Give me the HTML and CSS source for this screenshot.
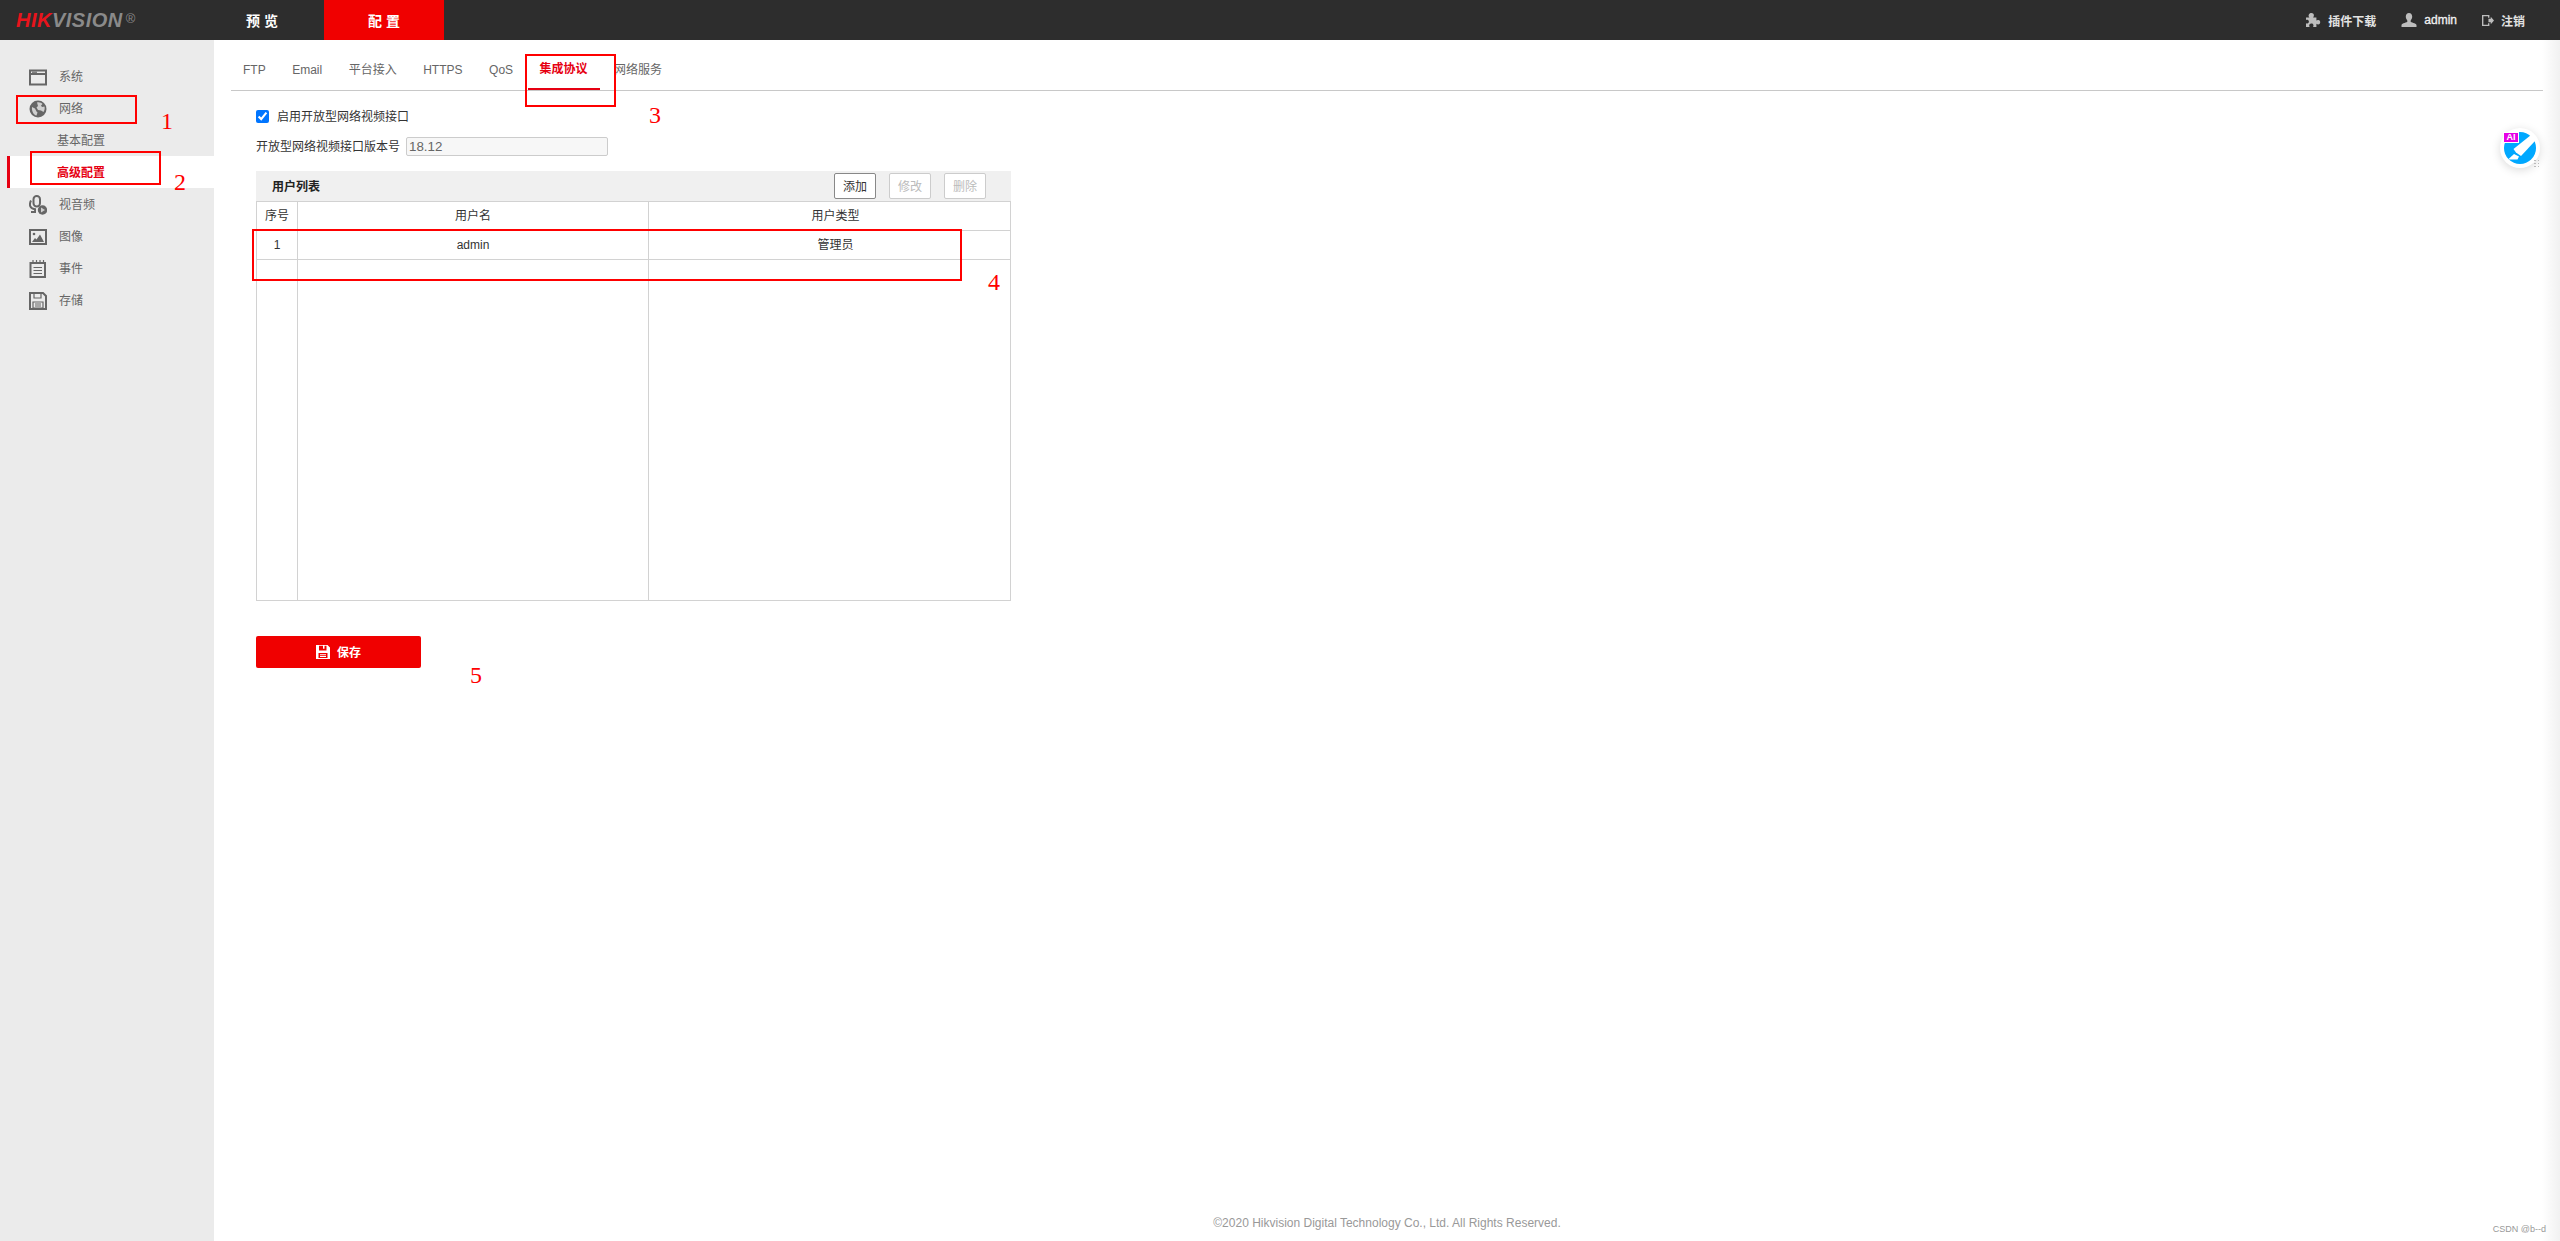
FILE: index.html
```html
<!DOCTYPE html>
<html lang="zh-CN">
<head>
<meta charset="utf-8">
<title>Hikvision 配置</title>
<link rel="stylesheet" href="styles.css">
</head>
<body>
<div class="app">
  <header class="topbar">
    <div class="logo"><span class="logo-hik">HIK</span><span class="logo-vision">VISION</span><span class="logo-reg">®</span></div>
    <nav class="mainnav">
      <a class="mainnav-item">预览</a>
      <a class="mainnav-item is-active">配置</a>
    </nav>
    <div class="tools">
      <div class="tool">
        <svg class="tool-icon" viewBox="0 0 16 16"><path d="M1 5.500h3.400C3.600 4.600 3.400 3.900 3.700 3 4.100 1.600 5.300 1 6.400 1c1.300 0 2.400.9 2.500 2.100.1.900-.2 1.600-.8 2.400h3.300v3.100c.9-.6 1.300-.7 2-.5 1.200.3 1.900 1.200 1.800 2.300-.1 1.100-1 1.900-2 2-.7 0-1.200-.2-1.800-.7V15H8c.5-.8.600-1.300.4-2-.3-1-1.200-1.500-2.200-1.400-1.100.1-1.900.9-2 1.900 0 .5.100 1 .5 1.500H1v-3.700c.6.300 1.100.4 1.600.2.800-.3 1.300-1 1.300-1.900S3.300 8 2.500 7.800C2 7.700 1.500 7.800 1 8.100z"/></svg>
        <span>插件下载</span>
      </div>
      <div class="tool">
        <svg class="tool-icon" viewBox="0 0 16 16"><path d="M8 1c2 0 3.200 1.500 3.200 3.600 0 1.600-.7 3-1.500 3.800v1.400c0 .5 5.300 1.500 5.800 3.200V15H.5v-2c.5-1.700 5.800-2.700 5.800-3.200V8.400C5.500 7.600 4.800 6.200 4.800 4.600 4.800 2.500 6 1 8 1z"/></svg>
        <span class="tool-latin">admin</span>
      </div>
      <div class="tool">
        <svg class="tool-icon tool-icon-small" viewBox="0 0 13 14"><path d="M0 1h8v3H6.500V2.500h-5v9h5V10H8v3H0zM7 5h2.500V3l3.500 4-3.500 4V9H7z"/></svg>
        <span>注销</span>
      </div>
    </div>
  </header>

  <div class="body">
    <aside class="sidebar">
      <div class="side-item">
        <svg class="side-icon" viewBox="0 0 18 18"><path d="M1 2.500h16v14H1z" class="ln"/><path d="M1 6h16" class="ln"/><path d="M3 4.200h5" class="ln-thin"/></svg>
        <span>系统</span>
      </div>
      <div class="side-item">
        <svg class="side-icon" viewBox="0 0 18 18"><circle cx="9" cy="9" r="8.500" class="fl"/><path d="M8 2.500c2-.6 4.500.2 5.500 1.500L12 5.500 13 7l2.500-.5c.5 2 0 4-1 5.500L12 10.500 9 10 7.500 7.500 9 6zM3 7l3 1.500 1.500 3 1 1-1 3C4.500 15 2.500 11 3 7z" class="lt"/></svg>
        <span>网络</span>
      </div>
      <div class="side-sub"><span>基本配置</span></div>
      <div class="side-sub is-active"><span>高级配置</span></div>
      <div class="side-item">
        <svg class="side-icon side-icon-tall" viewBox="0 0 18 20"><rect x="4.500" y="1" width="6.500" height="10.500" rx="3.200" class="ln"/><path d="M2 5.500C-.2 10 1 13.500 6 14.200v2.800H2" class="ln"/><circle cx="13.500" cy="15" r="4.700" class="fl"/><path d="M12 12.500l4 2.500-4 2.500z" class="lt"/></svg>
        <span>视音频</span>
      </div>
      <div class="side-item">
        <svg class="side-icon" viewBox="0 0 18 18"><path d="M1 2h16v14H1z" class="ln"/><path d="M3 14l3-4 1.500 1.500L11 6.500l4 7.500z" class="fl"/><circle cx="5" cy="6" r="1.300" class="fl"/></svg>
        <span>图像</span>
      </div>
      <div class="side-item">
        <svg class="side-icon" viewBox="0 0 18 18"><path d="M1.500 3h14.500v14H1.500z" class="ln"/><path d="M4 0v3M7.500 0v3M11 0v3M14.500 0v3M4.500 7.500h8.500M4.500 10.500h8.500M4.500 13.500h8.500" class="ln-thin"/></svg>
        <span>事件</span>
      </div>
      <div class="side-item">
        <svg class="side-icon" viewBox="0 0 18 18"><path d="M1 1h13l3 3v13H1z" class="ln"/><path d="M5 1.500h7v4.500H5z" class="ln-thin"/><path d="M4 10h10v6H4z" class="ln-thin"/><path d="M6 12h6M6 14h6" class="ln-thin"/></svg>
        <span>存储</span>
      </div>
    </aside>

    <main class="content">
      <div class="tabs">
        <a class="tab">FTP</a>
        <a class="tab">Email</a>
        <a class="tab">平台接入</a>
        <a class="tab">HTTPS</a>
        <a class="tab">QoS</a>
        <a class="tab is-active">集成协议</a>
        <a class="tab">网络服务</a>
      </div>

      <div class="form">
        <label class="form-row">
          <input class="check" type="checkbox" checked>
          <span class="check-label">启用开放型网络视频接口</span>
        </label>
        <div class="form-row">
          <span class="version-label">开放型网络视频接口版本号</span>
          <input class="version-input" type="text" value="18.12" disabled>
        </div>

        <section class="panel">
          <div class="panel-head">
            <span class="panel-title">用户列表</span>
            <div class="panel-actions">
              <button class="btn">添加</button>
              <button class="btn" disabled>修改</button>
              <button class="btn" disabled>删除</button>
            </div>
          </div>
          <table class="grid">
            <colgroup>
              <col class="col-no"><col class="col-name"><col class="col-type">
            </colgroup>
            <thead>
              <tr><th>序号</th><th>用户名</th><th class="cell-type">用户类型</th></tr>
            </thead>
            <tbody>
              <tr><td>1</td><td>admin</td><td class="cell-type">管理员</td></tr>
              <tr class="grid-filler"><td></td><td></td><td></td></tr>
            </tbody>
          </table>
        </section>

        <button class="save">
          <svg class="save-icon" viewBox="0 0 14 14"><path fill-rule="evenodd" d="M0 0h11.500L14 2.500V14H0zM3 .8v4.700h7.500V.8H8.500v3H7V.8zM2.500 8v5h9V8zM4 9.300h6v.9H4zM4 11h6v.9H4z"/></svg>
          <span class="save-text">保存</span>
        </button>
      </div>

      <footer class="copyright">©2020 Hikvision Digital Technology Co., Ltd. All Rights Reserved.</footer>
    </main>
  </div>

  <div class="edge-fade"></div>
  <div class="watermark">CSDN @b--d</div>

  <div class="ai-widget">
    <svg class="ai-art" viewBox="0 0 40 40">
      <circle cx="20" cy="20" r="16" fill="#00a8ff"/>
      <path d="M16 24.500l-2.500-3.500L31 7l5 1-1 5-14 15z" fill="#fff"/>
      <path d="M14 26l5 2.500-1.500 3H8z" fill="#fff"/>
    </svg>
    <span class="ai-badge">AI</span>
    <span class="ai-grip"></span>
  </div>

  <div class="mark mark-1"></div>
  <div class="mark mark-2"></div>
  <div class="mark mark-3"></div>
  <div class="mark mark-4"></div>
  <span class="num num-1">1</span>
  <span class="num num-2">2</span>
  <span class="num num-3">3</span>
  <span class="num num-4">4</span>
  <span class="num num-5">5</span>
</div>
</body>
</html>
```

FILE: styles.css
```css
* { box-sizing: border-box; }

html, body { margin: 0; height: 100%; }

body {
  font-family: "Liberation Sans", "Noto Sans CJK SC", sans-serif;
  font-size: 12px;
  color: #333;
  background: #fff;
  overflow: hidden;
}

.app {
  position: relative;
  display: flex;
  flex-direction: column;
  height: 1241px;
}

/* top bar */
.topbar {
  display: flex;
  align-items: stretch;
  flex: 0 0 40px;
  background: #2d2d2d;
}

.logo {
  display: flex;
  align-items: center;
  width: 204px;
  padding-left: 16px;
  font-weight: bold;
  font-style: italic;
  font-size: 20px;
  letter-spacing: .5px;
}

.logo-hik { color: #e8141c; }
.logo-vision { color: #8a8a8a; }

.logo-reg {
  align-self: flex-start;
  margin: 11px 0 0 3px;
  font-size: 13px;
  font-weight: normal;
  font-style: normal;
  letter-spacing: 0;
  color: #8a8a8a;
}

.mainnav { display: flex; }

.mainnav-item {
  display: flex;
  align-items: center;
  justify-content: center;
  width: 120px;
  font-size: 14px;
  font-weight: bold;
  letter-spacing: 4px;
  color: #fff;
}

.mainnav-item.is-active { padding-left: 4px; background: #f00000; }

.tools {
  display: flex;
  align-items: center;
  gap: 25px;
  margin-left: auto;
  padding-right: 35px;
}

.tool {
  display: flex;
  align-items: center;
  gap: 7px;
  font-weight: bold;
  color: #e2e2e2;
}

.tool-latin {
  font-weight: normal;
  color: #f2f2f2;
  -webkit-text-stroke: .3px #f2f2f2;
}

.tool-icon { width: 16px; height: 16px; fill: #bdbdbd; }
.tool-icon-small { width: 12px; height: 13px; }

/* shell */
.body { display: flex; flex: 1; min-height: 0; }

.sidebar {
  flex: 0 0 214px;
  padding-top: 20px;
  background: #ebebeb;
  color: #666;
}

.side-item {
  display: flex;
  align-items: center;
  gap: 12px;
  height: 32px;
  padding-left: 29px;
}

.side-item span, .side-sub span { margin-bottom: 2px; }

.side-icon { width: 18px; height: 18px; flex: none; margin-top: 2px; }
.side-icon-tall { height: 20px; }
.ln { fill: none; stroke: #666; stroke-width: 2; }
.ln-thin { fill: none; stroke: #666; stroke-width: 1.200; }
.fl { fill: #666; }
.lt { fill: #cfcfcf; }

.side-sub {
  display: flex;
  align-items: center;
  height: 32px;
  padding-left: 57px;
}

.side-sub.is-active {
  margin-left: 7px;
  padding-left: 47px;
  border-left: 3px solid #e60012;
  background: #fff;
  font-weight: bold;
  color: #e60012;
}

/* content */
.content {
  display: flex;
  flex: 1;
  flex-direction: column;
  min-width: 0;
  padding: 0 17px;
}

.tabs {
  display: flex;
  gap: 2.500px;
  flex: 0 0 51px;
  border-bottom: 1px solid #c8c8c8;
}

.tab {
  height: 50px;
  padding: 21px 12px 0;
  line-height: 18px;
  color: #666;
}

.tab.is-active {
  padding-top: 20px;
  background: linear-gradient(#e60012, #e60012) 0 48px / 100% 2px no-repeat;
  font-weight: bold;
  color: #e60012;
}

.form {
  display: flex;
  flex: 1;
  flex-direction: column;
  align-items: flex-start;
  padding: 10px 0 0 25px;
}

.form-row {
  display: flex;
  align-items: center;
  height: 30px;
}

.check { width: 13px; height: 13px; margin: 0; }
.check-label { margin: 0 0 2px 8px; }
.version-label { width: 150px; margin-bottom: 2px; }

.version-input {
  width: 202px;
  height: 19px;
  padding: 0 2px;
  border: 1px solid #ccc;
  border-radius: 2px;
  background: #f7f7f7;
  font: 13.330px "Liberation Sans", sans-serif;
  color: #666;
}

.panel { width: 755px; margin-top: 10px; }

.panel-head {
  display: flex;
  align-items: center;
  height: 30px;
  padding-left: 16px;
  background: #f0f0f0;
}

.panel-title { margin-bottom: 1px; font-weight: bold; color: #222; }

.panel-actions {
  display: flex;
  gap: 13px;
  margin-left: auto;
  padding-right: 25px;
}

.btn {
  width: 42px;
  height: 26px;
  padding: 0 0 2px;
  border: 1px solid #888;
  border-radius: 2px;
  background: #fff;
  font: 12px "Liberation Sans", "Noto Sans CJK SC", sans-serif;
  color: #333;
}

.btn:disabled { border-color: #ccc; color: #bbb; }

.grid {
  width: 755px;
  height: 400px;
  border-collapse: collapse;
  table-layout: fixed;
}

.col-no { width: 41px; }
.col-name { width: 351px; }

.grid th, .grid td {
  height: 29px;
  padding: 0;
  border: 1px solid #d2d2d2;
  text-align: center;
  font-weight: normal;
  color: #333;
}

.grid th { padding-bottom: 3px; }
.grid th.cell-type { padding: 0 0 3px 12px; }
.grid td.cell-type { padding: 0 0 4px 12px; }
.grid-filler td { height: auto; }

.save {
  display: flex;
  align-items: center;
  justify-content: center;
  gap: 7px;
  width: 165px;
  height: 32px;
  margin-top: 35px;
  padding: 0;
  border: 0;
  border-radius: 2px;
  background: #f00000;
  font: bold 12px "Liberation Sans", "Noto Sans CJK SC", sans-serif;
  color: #fff;
}

.save-icon { width: 14px; height: 14px; fill: #fff; }
.save-text { margin-bottom: 2px; }

.copyright {
  flex: none;
  padding-bottom: 9px;
  line-height: 18px;
  text-align: center;
  color: #999;
}

/* overlays */
.edge-fade {
  position: absolute;
  top: 40px;
  right: 0;
  bottom: 0;
  width: 18px;
  background: linear-gradient(to right, rgba(240, 240, 240, 0), #f1f1f1);
}

.watermark {
  position: absolute;
  right: 14px;
  bottom: 7px;
  font-size: 9px;
  color: #999;
}

.ai-widget {
  position: absolute;
  top: 128px;
  left: 2500px;
  width: 40px;
  height: 40px;
  border-radius: 50%;
  background: #fff;
  box-shadow: 0 2px 10px rgba(0, 0, 0, .15);
}

.ai-art { display: block; width: 40px; height: 40px; }

.ai-badge {
  position: absolute;
  top: 4px;
  left: 3px;
  width: 16px;
  height: 11px;
  background: #e600e6;
  border: 1px solid #fff;
  font-size: 9px;
  font-weight: bold;
  line-height: 9px;
  text-align: center;
  color: #fff;
}

.ai-grip {
  position: absolute;
  right: 1px;
  bottom: 1px;
  width: 6px;
  height: 8px;
  background: radial-gradient(circle, #bbb 0 .7px, transparent 1px) 0 0 / 4px 3px;
}

.mark {
  position: absolute;
  border: 2px solid #f00;
}

.mark-1 { left: 16px; top: 95px; width: 121px; height: 29px; }
.mark-2 { left: 30px; top: 151px; width: 131px; height: 34px; }
.mark-3 { left: 525px; top: 54px; width: 91px; height: 53px; }
.mark-4 { left: 252px; top: 229px; width: 710px; height: 52px; }

.num {
  position: absolute;
  font-family: "Liberation Serif", serif;
  font-size: 24px;
  line-height: 24px;
  color: #f00;
}

.num-1 { left: 161px; top: 109px; }
.num-2 { left: 174px; top: 170px; }
.num-3 { left: 649px; top: 103px; }
.num-4 { left: 988px; top: 270px; }
.num-5 { left: 470px; top: 663px; }
```
